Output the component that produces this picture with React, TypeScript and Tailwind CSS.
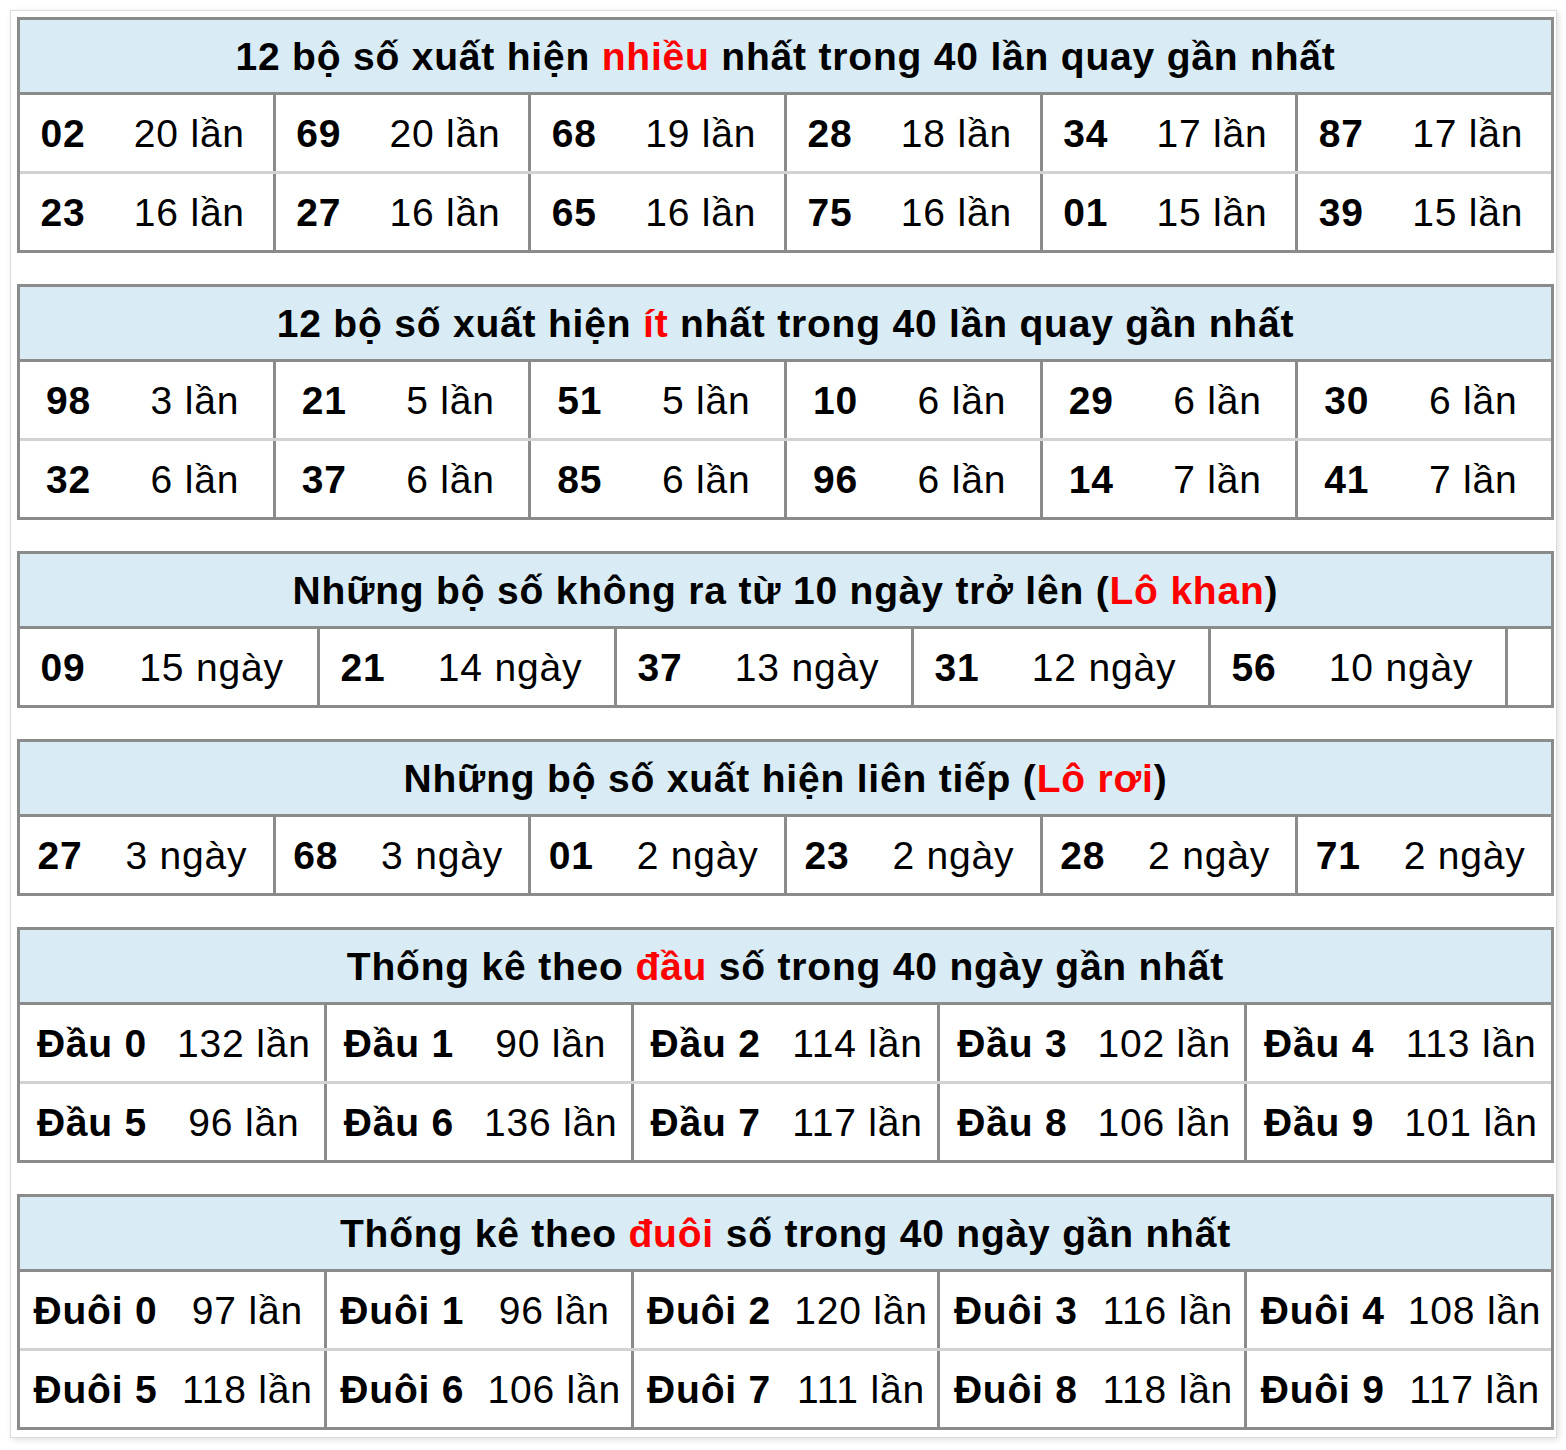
import React from 'react';

type Pair = [string, string];

interface StatTableProps {
  title: React.ReactNode;
  rows: Pair[][];
  numWidth: string;
  pairWidth?: string;
  tail?: boolean;
}

const Red = ({ children }: { children: React.ReactNode }) => (
  <span className="text-[#ff0000]">{children}</span>
);

const StatTable = ({ title, rows, numWidth, pairWidth, tail }: StatTableProps) => {
  return (
    <div className="border-[3px] border-[#8b8b8b] bg-white">
      <div className="h-[75px] bg-[#d9ecf5] border-b-[3px] border-[#8b8b8b] flex items-center justify-center font-bold text-black">
        {title}
      </div>
      {rows.map((row, ri) => (
        <div
          key={ri}
          className={`flex ${ri < rows.length - 1 ? 'h-[79px] border-b-[3px] border-[#d2d2d2]' : 'h-[76px]'}`}
        >
          {row.map(([num, count], ci) => (
            <div
              key={ci}
              className={`flex items-center ${pairWidth ?? 'flex-1'} ${ci > 0 ? 'border-l-[3px] border-[#8b8b8b]' : ''}`}
            >
              <span className={`${numWidth} text-center font-bold`}>{num}</span>
              <span className="flex-1 text-center">{count}</span>
            </div>
          ))}
          {tail && <div className="flex-1 border-l-[3px] border-[#8b8b8b]" />}
        </div>
      ))}
    </div>
  );
};

const lan = (n: number) => `${n} lần`;
const ngay = (n: number) => `${n} ngày`;

export default function App() {
  return (
    <div className="min-h-[1450px] bg-white pt-[10px] pl-[10px]">
      <div
        className="w-[1547px] border border-[#dcdcdc] shadow-[2px_2px_6px_rgba(0,0,0,0.12)] pl-[6px] pr-[2px] pt-[6px] pb-[7px] flex flex-col gap-[31px] text-[39px] tracking-[0.8px] text-black leading-none"
        style={{ fontFamily: '"Liberation Sans", Arial, sans-serif' }}
      >
        <StatTable
          title={<span>12 bộ số xuất hiện <Red>nhiều</Red> nhất trong 40 lần quay gần nhất</span>}
          numWidth="w-[86px]"
          rows={[
            [['02', lan(20)], ['69', lan(20)], ['68', lan(19)], ['28', lan(18)], ['34', lan(17)], ['87', lan(17)]],
            [['23', lan(16)], ['27', lan(16)], ['65', lan(16)], ['75', lan(16)], ['01', lan(15)], ['39', lan(15)]],
          ]}
        />
        <StatTable
          title={<span>12 bộ số xuất hiện <Red>ít</Red> nhất trong 40 lần quay gần nhất</span>}
          numWidth="w-[97px]"
          rows={[
            [['98', lan(3)], ['21', lan(5)], ['51', lan(5)], ['10', lan(6)], ['29', lan(6)], ['30', lan(6)]],
            [['32', lan(6)], ['37', lan(6)], ['85', lan(6)], ['96', lan(6)], ['14', lan(7)], ['41', lan(7)]],
          ]}
        />
        <StatTable
          title={<span>Những bộ số không ra từ 10 ngày trở lên (<Red>Lô khan</Red>)</span>}
          numWidth="w-[86px]"
          pairWidth="w-[297px] shrink-0"
          tail
          rows={[[['09', ngay(15)], ['21', ngay(14)], ['37', ngay(13)], ['31', ngay(12)], ['56', ngay(10)]]]}
        />
        <StatTable
          title={<span>Những bộ số xuất hiện liên tiếp (<Red>Lô rơi</Red>)</span>}
          numWidth="w-[80px]"
          rows={[[['27', ngay(3)], ['68', ngay(3)], ['01', ngay(2)], ['23', ngay(2)], ['28', ngay(2)], ['71', ngay(2)]]]}
        />
        <StatTable
          title={<span>Thống kê theo <Red>đầu</Red> số trong 40 ngày gần nhất</span>}
          numWidth="w-[144px]"
          rows={[
            [['Đầu 0', lan(132)], ['Đầu 1', lan(90)], ['Đầu 2', lan(114)], ['Đầu 3', lan(102)], ['Đầu 4', lan(113)]],
            [['Đầu 5', lan(96)], ['Đầu 6', lan(136)], ['Đầu 7', lan(117)], ['Đầu 8', lan(106)], ['Đầu 9', lan(101)]],
          ]}
        />
        <StatTable
          title={<span>Thống kê theo <Red>đuôi</Red> số trong 40 ngày gần nhất</span>}
          numWidth="w-[151px]"
          rows={[
            [['Đuôi 0', lan(97)], ['Đuôi 1', lan(96)], ['Đuôi 2', lan(120)], ['Đuôi 3', lan(116)], ['Đuôi 4', lan(108)]],
            [['Đuôi 5', lan(118)], ['Đuôi 6', lan(106)], ['Đuôi 7', lan(111)], ['Đuôi 8', lan(118)], ['Đuôi 9', lan(117)]],
          ]}
        />
      </div>
    </div>
  );
}
